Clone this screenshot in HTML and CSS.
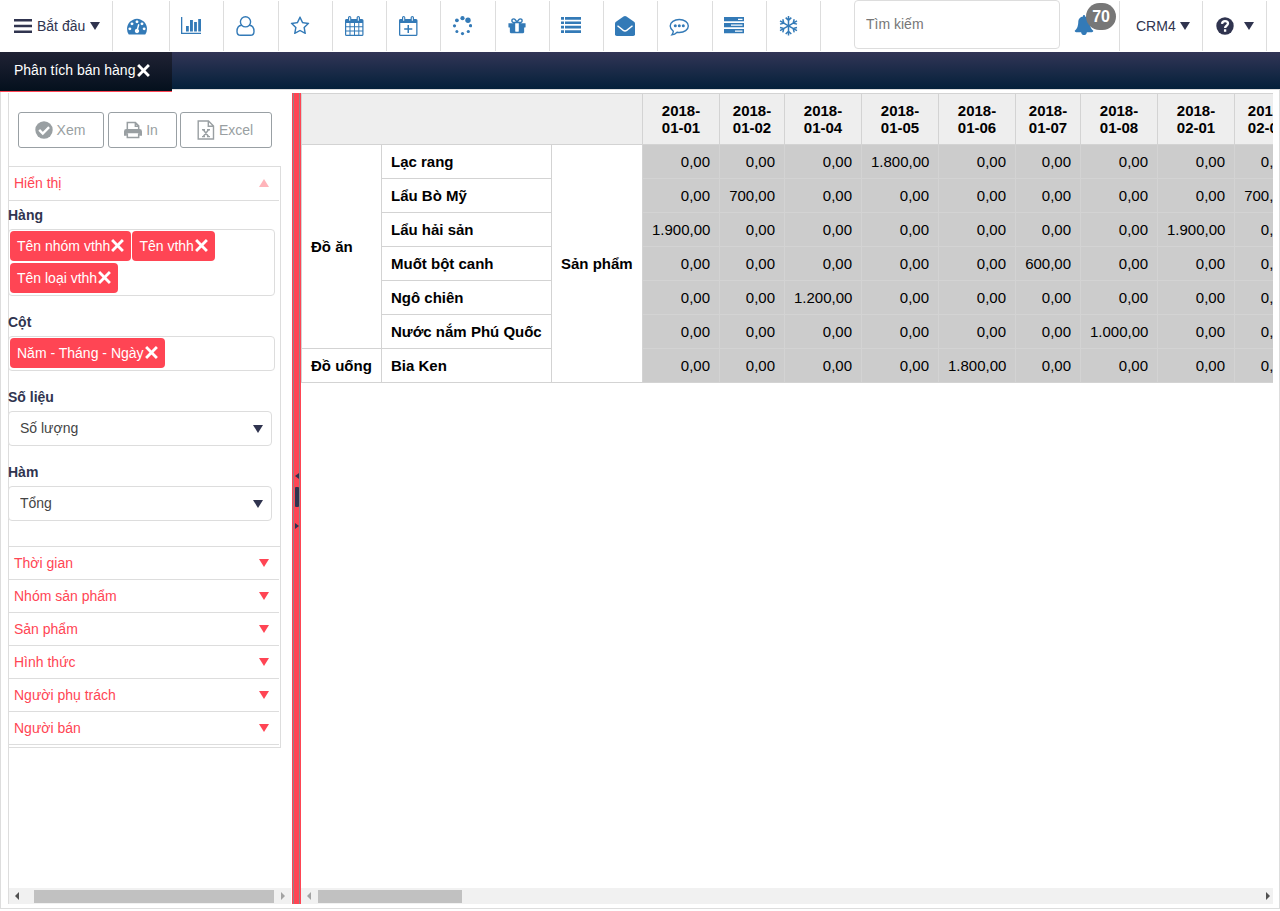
FILE: index.html
```html
<!DOCTYPE html>
<html lang="vi">
<head>
<meta charset="utf-8">
<meta name="viewport" content="width=device-width, initial-scale=1">
<title>Phân tích bán hàng</title>
<link rel="stylesheet" href="styles.css">
</head>
<body>
<svg class="sprite" aria-hidden="true">
  <symbol id="caret" viewBox="0 0 10 8"><path d="M0 0h10L5 8z"/></symbol>
  <symbol id="times" viewBox="0 0 12 12"><path d="M1 1L11 11M11 1L1 11" fill="none" stroke="currentColor" stroke-width="2.600"/></symbol>
</svg>

<header class="topbar">
  <button class="start" type="button">
    <svg class="start-icon" viewBox="0 0 18 14"><path d="M0 0h18v2.500H0zM0 5.800h18v2.500H0zM0 11.500h18V14H0z"/></svg>
    Bắt đầu
    <svg class="caret"><use href="#caret"/></svg>
  </button>
  <nav class="shortcuts">
    <a class="shortcut wide" href="#" aria-label="Bảng điều khiển"><svg viewBox="0 0 1792 1792"><path d="M384 1152q0-53-37.500-90.500t-90.500-37.500-90.500 37.500-37.500 90.500 37.500 90.500 90.500 37.500 90.500-37.500 37.500-90.500zm192-448q0-53-37.500-90.500t-90.500-37.500-90.500 37.500-37.500 90.500 37.500 90.500 90.500 37.500 90.500-37.500 37.500-90.500zm428 481l101-382q6-26-7.500-48.500t-38.500-29.500-48 6.500-30 39.500l-101 382q-60 5-107 43.500t-63 98.500q-20 77 20 146t117 89 146-20 89-117q16-60-6-117t-72-91zm660-33q0-53-37.500-90.500t-90.500-37.500-90.500 37.500-37.500 90.500 37.500 90.500 90.500 37.500 90.500-37.500 37.500-90.500zm-640-640q0-53-37.500-90.500t-90.500-37.500-90.500 37.500-37.500 90.500 37.500 90.500 90.500 37.500 90.500-37.500 37.500-90.500zm448 192q0-53-37.500-90.500t-90.500-37.500-90.500 37.500-37.500 90.500 37.500 90.500 90.500 37.500 90.500-37.500 37.500-90.500zm320 448q0 261-141 483-19 29-54 29h-1402q-35 0-54-29-141-221-141-483 0-182 71-348t191-286 286-191 348-71 348 71 286 191 191 286 71 348z"/></svg></a>
    <a class="shortcut" href="#" aria-label="Báo cáo"><svg viewBox="0 0 20 20"><path d="M0 1h1.300v15.700H20V18H0zM5 10h2.800v5.500H5zM9 4h2.900v11.500H9zM13.100 6h2.800v9.500h-2.800zM17.200 3H20v12.500h-2.800z"/></svg></a>
    <a class="shortcut" href="#" aria-label="Khách hàng"><svg viewBox="0 0 20 20"><g fill="none" stroke="currentColor" stroke-width="1.400"><circle cx="10.500" cy="5.800" r="5.100"/><path d="M6.600 9.200C3.300 9.400 2 12.300 2 15.500c0 2.300 1.400 3.800 3.600 3.800h9.800c2.200 0 3.600-1.500 3.600-3.800 0-3.200-1.300-6.100-4.600-6.300"/></g></svg></a>
    <a class="shortcut" href="#" aria-label="Yêu thích"><svg viewBox="0 0 1792 1792"><path d="M1201 1004l306-297-422-62-189-382-189 382-422 62 306 297-73 421 378-199 377 199zm527-357q0 22-26 48l-363 354 86 500q1 7 1 20 0 50-41 50-19 0-40-12l-449-236-449 236q-22 12-40 12-21 0-31.500-14.500t-10.500-35.500q0-6 2-20l86-500-364-354q-25-27-25-48 0-37 56-46l502-73 225-455q19-41 49-41t49 41l225 455 502 73q56 9 56 46z"/></svg></a>
    <a class="shortcut" href="#" aria-label="Lịch"><svg viewBox="0 0 20 20"><path fill-rule="evenodd" d="M2 3h2V1.600Q4 0 5.600 0T7.300 1.600V3h5.300V1.600Q12.600 0 14.300 0T16 1.600V3h2q1.500 0 1.500 1.500v14Q19.500 20 18 20H2.500Q1 20 1 18.500v-14Q1 3 2 3zM5.200 1.300v3.500h1V1.300zM13.800 1.300v3.500h1V1.300zM2.200 7v3.200h3.300V7zM6.500 7v3.200H10V7zM11 7v3.200h3.300V7zM15.300 7v3.200h3V7zM2.200 11.200v3.300h3.300v-3.300zM6.500 11.200v3.300H10v-3.300zM11 11.200v3.300h3.300v-3.300zM15.300 11.200v3.300h3v-3.300zM2.200 15.500v3.300h3.300v-3.300zM6.500 15.500v3.300H10v-3.300zM11 15.500v3.300h3.300v-3.300zM15.300 15.500v3.300h3v-3.300z"/></svg></a>
    <a class="shortcut" href="#" aria-label="Thêm lịch"><svg viewBox="0 0 20 20"><path fill-rule="evenodd" d="M2 3h2V1.600Q4 0 5.600 0T7.300 1.600V3h5.300V1.600Q12.600 0 14.300 0T16 1.600V3h2q1.500 0 1.500 1.500v14Q19.500 20 18 20H2.500Q1 20 1 18.500v-14Q1 3 2 3zM5.200 1.300v3.500h1V1.300zM13.800 1.300v3.500h1V1.300zM2.300 7v11.700h15.900V7zM9.500 9h1.500v3.300h3.300v1.400H11V17H9.500v-3.300H6.200v-1.400h3.300z"/></svg></a>
    <a class="shortcut" href="#" aria-label="Tiến trình"><svg viewBox="0 0 20 20"><circle cx="10.500" cy="2.200" r="2.100"/><circle cx="16" cy="4.200" r="2.700"/><circle cx="18.500" cy="9.700" r="1.600"/><circle cx="16.300" cy="15.500" r="1.600"/><circle cx="10.500" cy="17.600" r="1.600"/><circle cx="4.900" cy="15.400" r="1.500"/><circle cx="2.500" cy="9.800" r="1.600"/><circle cx="4.900" cy="4.300" r="1.900"/></svg></a>
    <a class="shortcut" href="#" aria-label="Khuyến mãi"><svg viewBox="0 0 1792 1792"><path d="M1056 1356v-716h-320v716q0 25 18 38.500t46 13.500h192q28 0 46-13.500t18-38.500zm-456-844h195l-126-161q-26-31-69-31-40 0-68 28t-28 68 28 68 68 28zm688-96q0-40-28-68t-68-28q-43 0-69 31l-125 161h194q40 0 68-28t28-68zm376 256v320q0 14-9 23t-23 9h-96v416q0 40-28 68t-68 28h-1088q-40 0-68-28t-28-68v-416h-96q-14 0-23-9t-9-23v-320q0-14 9-23t23-9h440q-93 0-158.500-65.500t-65.500-158.500 65.500-158.500 158.500-65.500q107 0 168 77l128 165 128-165q61-77 168-77 93 0 158.500 65.500t65.500 158.500-65.500 158.500-158.500 65.500h440q14 0 23 9t9 23z"/></svg></a>
    <a class="shortcut" href="#" aria-label="Danh sách"><svg viewBox="0 0 20 20"><path d="M0 1h3v2.700H0zM4 1h16v2.700H4zM0 5.400h3v2.700H0zM4 5.400h16v2.700H4zM0 9.800h3v2.700H0zM4 9.800h16v2.700H4zM0 14.200h3v2.700H0zM4 14.200h16v2.700H4z"/></svg></a>
    <a class="shortcut" href="#" aria-label="Thư"><svg viewBox="0 0 20 20"><path d="M0 7.500Q0 6.500 1 5.800L8.500.6Q10 -.4 11.500.6L19 5.800q1 .7 1 1.700v10.700q0 1.800-1.800 1.800H1.800Q0 20 0 18.200z"/><path d="M2.500 9.700l5.800 4.700q1.700 1.300 3.400 0l5.800-4.700" fill="none" stroke="#fff" stroke-width="1.400"/></svg></a>
    <a class="shortcut" href="#" aria-label="Tin nhắn"><svg viewBox="0 0 20 20"><path d="M10.300 3.500c5 0 9 2.800 9 6.500s-4 6.500-9 6.500c-.8 0-1.500-.1-2.200-.2-1.500 1.500-3.300 2.400-5.200 2.600.8-1.100 1.300-2.300 1.400-3.700C2.500 13.800 1.200 12 1.200 10c0-3.700 4.100-6.500 9.100-6.500z" fill="none" stroke="currentColor" stroke-width="1.400"/><circle cx="6.300" cy="9.800" r="1.500"/><circle cx="10.300" cy="9.800" r="1.500"/><circle cx="14.300" cy="9.800" r="1.500"/></svg></a>
    <a class="shortcut" href="#" aria-label="Công việc"><svg viewBox="0 0 20 20"><path fill-rule="evenodd" d="M0 1h20v4.200H0zM14 2.700v1.200h4.500V2.700zM0 7h20v4.200H0zM7 8.500v1.300h11.500V8.500zM0 13h20v4.200H0zM11 14.500v1.200h7.500v-1.200z"/></svg></a>
    <a class="shortcut" href="#" aria-label="Thời tiết"><svg viewBox="0 0 20 20"><g fill="none" stroke="currentColor" stroke-width="1.500"><path id="arm" d="M10.500 9.800V0M7.700 1.600l2.800 2.800 2.800-2.800"/><use href="#arm" transform="rotate(60 10.500 9.800)"/><use href="#arm" transform="rotate(120 10.500 9.800)"/><use href="#arm" transform="rotate(180 10.500 9.800)"/><use href="#arm" transform="rotate(240 10.500 9.800)"/><use href="#arm" transform="rotate(300 10.500 9.800)"/></g></svg></a>
  </nav>
  <input class="search" type="search" placeholder="Tìm kiếm" aria-label="Tìm kiếm">
  <button class="bell" type="button" aria-label="Thông báo">
    <svg viewBox="0 0 1792 1792"><path d="M1728 1408q0 52-38 90t-90 38h-448q0 106-75 181t-181 75-181-75-75-181h-448q-52 0-90-38t-38-90q50-42 91-88t85-119.500 74.500-158.500 50-206 19.500-260q0-152 117-282.500t307-158.500q-8-19-8-39 0-40 28-68t68-28 68 28 28 68q0 20-8 39 190 28 307 158.500t117 282.500q0 139 19.500 260t50 206 74.500 158.500 85 119.500 91 88z"/></svg>
    <span class="badge">70</span>
  </button>
  <button class="account" type="button">CRM4 <svg class="caret"><use href="#caret"/></svg></button>
  <button class="help" type="button" aria-label="Trợ giúp">
    <svg class="help-icon" viewBox="0 0 18 18"><circle cx="9" cy="9" r="8.700"/><path d="M6 6.800C6.200 5 7.400 4.100 9 4.100c1.700 0 3 1 3 2.500 0 2.200-2.900 2.100-2.900 4.300M9.100 12.300v2.400" fill="none" stroke="#fff" stroke-width="2.300"/></svg>
    <svg class="caret"><use href="#caret"/></svg>
  </button>
</header>

<div class="tabs">
  <div class="tab"><span>Phân tích bán hàng</span><button class="close" type="button" aria-label="Đóng"><svg><use href="#times"/></svg></button></div>
</div>

<main class="panel">
  <aside class="sidebar">
    <div class="sidebar-body">
      <div class="actions">
        <button class="action view" type="button"><svg viewBox="0 0 18 18"><circle cx="9" cy="9" r="8.700"/><path d="M4.200 8.800l3.600 3.700 6.300-6.300" fill="none" stroke="#fff" stroke-width="2.400"/></svg>Xem</button>
        <button class="action print" type="button"><svg viewBox="0 0 19 18"><path d="M3.500 8V1h8.500L15.500 4.500V8M3.500 12.500V17h12v-4.500M12 1v4h4" fill="none" stroke="currentColor" stroke-width="1.600"/><path d="M2.500 8h14Q19 8 19 10.500V15h-3v-2.500H3V15H0v-4.500Q0 8 2.500 8z"/></svg>In</button>
        <button class="action excel" type="button"><svg viewBox="0 0 18 20"><path d="M1.200 1h10.300l5 5v13H1.200zM11.300 1v5.200h5.200" fill="none" stroke="currentColor" stroke-width="1.400"/><path d="M6.300 9.800l5.200 6.700M11.500 9.800L6.300 16.500M5 9.700h3M10 9.700h3M5 16.600h3M10 16.600h3" fill="none" stroke="currentColor" stroke-width="1.400"/></svg>Excel</button>
      </div>
      <div class="accordion">
        <button class="section open" type="button" aria-expanded="true">Hiển thị<svg class="caret up"><use href="#caret"/></svg></button>
        <form class="fields">
          <div class="field">
            <span class="label">Hàng</span>
            <div class="tags rows-two">
              <span class="tag">Tên nhóm vthh<button class="close" type="button" aria-label="Bỏ Tên nhóm vthh"><svg><use href="#times"/></svg></button></span>
              <span class="tag">Tên vthh<button class="close" type="button" aria-label="Bỏ Tên vthh"><svg><use href="#times"/></svg></button></span>
              <span class="tag">Tên loại vthh<button class="close" type="button" aria-label="Bỏ Tên loại vthh"><svg><use href="#times"/></svg></button></span>
            </div>
          </div>
          <div class="field">
            <span class="label">Cột</span>
            <div class="tags">
              <span class="tag">Năm - Tháng - Ngày<button class="close" type="button" aria-label="Bỏ Năm - Tháng - Ngày"><svg><use href="#times"/></svg></button></span>
            </div>
          </div>
          <div class="field">
            <label class="label" for="metric">Số liệu</label>
            <div class="pick"><select id="metric"><option>Số lượng</option></select><svg class="caret"><use href="#caret"/></svg></div>
          </div>
          <div class="field">
            <label class="label" for="func">Hàm</label>
            <div class="pick"><select id="func"><option>Tổng</option></select><svg class="caret"><use href="#caret"/></svg></div>
          </div>
        </form>
        <button class="section" type="button">Thời gian<svg class="caret"><use href="#caret"/></svg></button>
        <button class="section" type="button">Nhóm sản phẩm<svg class="caret"><use href="#caret"/></svg></button>
        <button class="section" type="button">Sản phẩm<svg class="caret"><use href="#caret"/></svg></button>
        <button class="section" type="button">Hình thức<svg class="caret"><use href="#caret"/></svg></button>
        <button class="section" type="button">Người phụ trách<svg class="caret"><use href="#caret"/></svg></button>
        <button class="section" type="button">Người bán<svg class="caret"><use href="#caret"/></svg></button>
      </div>
    </div>
    <div class="scrollbar side-scroll">
      <svg class="arrow" viewBox="0 0 4 8"><path d="M4 0v8L0 4z"/></svg>
      <div class="thumb"></div>
      <svg class="arrow dim" viewBox="0 0 4 8"><path d="M0 0v8l4-4z"/></svg>
    </div>
  </aside>

  <div class="splitter">
    <div class="grip">
      <svg class="arrow" viewBox="0 0 4 6"><path d="M4 0v6L0 3z"/></svg>
      <span class="bar"></span>
      <svg class="arrow" viewBox="0 0 4 6"><path d="M0 0v6l4-3z"/></svg>
    </div>
  </div>

  <section class="report">
    <div class="report-body">
      <table class="pivot">
        <colgroup>
          <col class="group"><col class="item"><col class="kind">
          <col class="date"><col class="date narrow"><col class="date"><col class="date"><col class="date"><col class="date narrow"><col class="date"><col class="date"><col class="date narrow">
        </colgroup>
        <thead>
          <tr><th colspan="3"></th><th>2018-01-01</th><th>2018-01-02</th><th>2018-01-04</th><th>2018-01-05</th><th>2018-01-06</th><th>2018-01-07</th><th>2018-01-08</th><th>2018-02-01</th><th>2018-02-02</th></tr>
        </thead>
        <tbody>
          <tr><th rowspan="6">Đồ ăn</th><th>Lạc rang</th><th rowspan="7">Sản phẩm</th><td>0,00</td><td>0,00</td><td>0,00</td><td>1.800,00</td><td>0,00</td><td>0,00</td><td>0,00</td><td>0,00</td><td>0,00</td></tr>
          <tr><th>Lẩu Bò Mỹ</th><td>0,00</td><td>700,00</td><td>0,00</td><td>0,00</td><td>0,00</td><td>0,00</td><td>0,00</td><td>0,00</td><td>700,00</td></tr>
          <tr><th>Lẩu hải sản</th><td>1.900,00</td><td>0,00</td><td>0,00</td><td>0,00</td><td>0,00</td><td>0,00</td><td>0,00</td><td>1.900,00</td><td>0,00</td></tr>
          <tr><th>Muốt bột canh</th><td>0,00</td><td>0,00</td><td>0,00</td><td>0,00</td><td>0,00</td><td>600,00</td><td>0,00</td><td>0,00</td><td>0,00</td></tr>
          <tr><th>Ngô chiên</th><td>0,00</td><td>0,00</td><td>1.200,00</td><td>0,00</td><td>0,00</td><td>0,00</td><td>0,00</td><td>0,00</td><td>0,00</td></tr>
          <tr><th>Nước nắm Phú Quốc</th><td>0,00</td><td>0,00</td><td>0,00</td><td>0,00</td><td>0,00</td><td>0,00</td><td>1.000,00</td><td>0,00</td><td>0,00</td></tr>
          <tr><th>Đồ uống</th><th>Bia Ken</th><td>0,00</td><td>0,00</td><td>0,00</td><td>0,00</td><td>1.800,00</td><td>0,00</td><td>0,00</td><td>0,00</td><td>0,00</td></tr>
        </tbody>
      </table>
    </div>
    <div class="scrollbar report-scroll">
      <svg class="arrow dim" viewBox="0 0 4 8"><path d="M4 0v8L0 4z"/></svg>
      <div class="thumb"></div>
      <svg class="arrow" viewBox="0 0 4 8"><path d="M0 0v8l4-4z"/></svg>
    </div>
  </section>
</main>
</body>
</html>
```
FILE: styles.css
```css
* { box-sizing: border-box; }
body {
  margin: 0;
  padding-bottom: 2px;
  min-height: 100vh;
  display: flex;
  flex-direction: column;
  background: #fff;
  color: #30344f;
  font: 14px/20px "Liberation Sans", Arial, sans-serif;
}
button, input, select { font: inherit; color: inherit; }
button { margin: 0; padding: 0; border: 0; background: none; }
svg { display: block; flex: none; fill: currentColor; }
.sprite { position: absolute; width: 0; height: 0; }
.caret { width: 10px; height: 8px; }

/* top bar */
.topbar { display: flex; height: 52px; padding-right: 13px; }
.start, .account, .help, .shortcut { height: 50px; margin-top: 1px; padding-bottom: 1px; border-right: 1px solid #ddd; }
.start { display: flex; align-items: center; width: 113px; padding-left: 14px; gap: 5px; }
.start-icon { width: 18px; height: 14px; }
.shortcuts { display: flex; width: 708px; }
.shortcut { flex: 1; display: flex; align-items: center; padding-left: 11px; color: #337ab7; }
.shortcut.wide { flex: none; width: 57px; padding-left: 14px; }
.shortcut svg { width: 20px; height: 20px; }
.search {
  width: 206px;
  height: 49px;
  margin-left: auto;
  padding: 0 11px 2px;
  border: 1px solid #ddd;
  border-radius: 4px;
  outline: 0;
  appearance: none;
}
.search::placeholder { color: #777; opacity: 1; }
.bell { position: relative; width: 60px; height: 50px; margin-top: 1px; padding: 0 0 2px 14px; border-right: 1px solid #ddd; color: #337ab7; }
.bell svg { width: 20px; height: 20px; }
.badge {
  position: absolute;
  top: 2px;
  right: 3px;
  padding: 5px 6px 4px;
  border-radius: 14px;
  background: #777;
  color: #fff;
  font-weight: bold;
  font-size: 16px;
  line-height: 18px;
}
.account { display: flex; align-items: center; width: 83px; gap: 4px; padding-left: 16px; }
.help { display: flex; align-items: center; width: 64px; gap: 10px; padding-left: 13px; }
.help-icon { width: 18px; height: 18px; }

/* tabs */
.tabs { height: 37px; background: linear-gradient(#323556, #04203a); }
.tab {
  position: relative;
  display: flex;
  align-items: center;
  gap: 2px;
  width: 172px;
  height: 40px;
  padding: 0 0 3px 14px;
  border-bottom: 1px solid #ff4554;
  background: linear-gradient(#202234, #04101d);
  color: #fff;
}
.close svg { width: 13px; height: 13px; }

/* work area */
.panel { flex: 1; display: flex; min-height: 0; padding: 3px 6px 4px 7px; border: 1px solid #ddd; }
.sidebar {
  display: flex;
  flex-direction: column;
  width: 284px;
  flex: none;
  background: linear-gradient(#ddd, #ddd) 0 0 / 1px 100% no-repeat;
}
.sidebar-body { flex: 1; padding-right: 11px; }
.actions { display: flex; justify-content: space-between; padding: 19px 9px 18px 10px; }
.action {
  display: flex;
  align-items: center;
  justify-content: center;
  gap: 4px;
  height: 36px;
  padding: 0 2px 1px 0;
  border: 1px solid #99a0a4;
  border-radius: 3px;
  color: #999fa2;
}
.action svg { width: 18px; height: 20px; }
.view { width: 86px; }
.print { width: 69px; }
.excel { width: 92px; }

.accordion { padding-bottom: 2px; border: 1px solid #ddd; border-left: 0; }
.section {
  display: flex;
  align-items: center;
  justify-content: space-between;
  width: 271px;
  height: 33px;
  padding: 0 10px 1px 6px;
  border-bottom: 1px solid #ddd;
  color: #ff4554;
}
.section.open { height: 34px; }
.up { transform: rotate(180deg); opacity: 0.4; }
.fields { padding-bottom: 13px; border-bottom: 1px solid #ddd; }
.field { padding: 4px 0 12px; }
.label { display: block; margin-bottom: 4px; font-weight: bold; }
.tags {
  display: flex;
  flex-wrap: wrap;
  align-content: flex-start;
  gap: 2px 1px;
  width: 267px;
  min-height: 35px;
  padding: 1px;
  border: 1px solid #ddd;
  border-radius: 4px;
}
.rows-two { min-height: 67px; }
.tag {
  display: flex;
  align-items: center;
  gap: 1px;
  height: 30px;
  padding: 0 7px 1px;
  border-radius: 4px;
  background: #ff4554;
  color: #fff;
}
.pick { display: grid; align-items: center; width: 264px; }
.pick select {
  grid-area: 1 / 1;
  width: 100%;
  height: 35px;
  padding: 0 30px 1px 11px;
  border: 1px solid #ddd;
  border-radius: 4px;
  background: #fff;
  color: #444;
  appearance: none;
}
.pick .caret { grid-area: 1 / 1; justify-self: end; margin-right: 9px; pointer-events: none; }

.scrollbar { display: flex; align-items: center; height: 16px; background: #f1f1f1; color: #505050; }
.scrollbar .arrow { width: 4px; height: 8px; margin: 0 6px; }
.scrollbar .dim { color: #a3a3a3; }
.scrollbar .thumb { height: 13px; background: #c1c1c1; }
.side-scroll { margin: 0 1px; }
.side-scroll .thumb { flex: 1; margin-left: 9px; }
.side-scroll .dim { margin-left: 7px; }
.report-scroll .thumb { width: 144px; margin: 0 auto 0 1px; }
.report-scroll .arrow:last-child { margin-right: 3px; }

.splitter { width: 9px; flex: none; display: flex; padding: 0 1px; background: #ff4554; }
.grip {
  flex: 1;
  display: flex;
  flex-direction: column;
  align-items: center;
  justify-content: center;
  padding-top: 4px;
  border: solid #938386;
  border-width: 0 1px;
}
.grip .arrow { width: 4px; height: 6px; }
.grip .bar { width: 4px; height: 20px; margin: 8px 0 16px; border-radius: 1px; background: #30344f; }

.report { flex: 1; min-width: 0; display: flex; flex-direction: column; }
.report-body { flex: 1; overflow: hidden; }
.pivot { table-layout: fixed; width: 999px; border-collapse: collapse; color: #000; font-size: 15px; line-height: 17px; }
.pivot .group { width: 80px; }
.pivot .item { width: 170px; }
.pivot .kind { width: 91px; }
.pivot .date { width: 77px; }
.pivot .narrow { width: 65px; }
.pivot th, .pivot td { padding: 8px 9px; border: 1px solid #d3d3d3; }
.pivot thead th { background: #eee; }
.pivot tbody th { padding-right: 8px; text-align: left; white-space: nowrap; }
.pivot td { background: #ccc; text-align: right; white-space: nowrap; }
```
